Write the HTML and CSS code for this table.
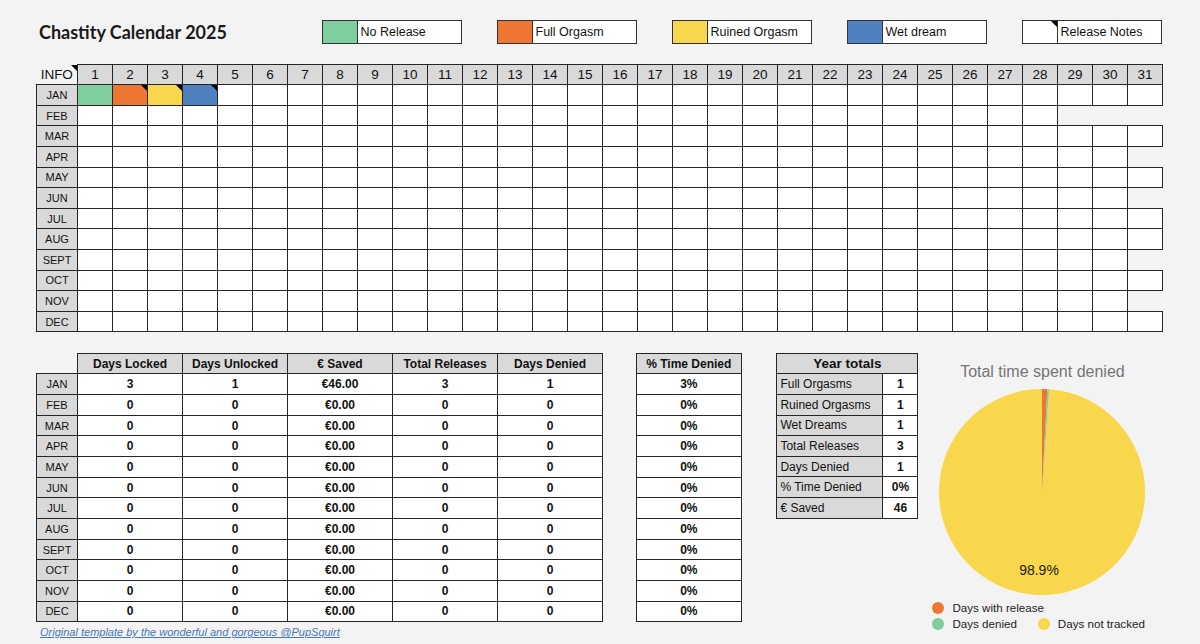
FILE: index.html
```html
<!DOCTYPE html>
<html lang="en">
<head>
<meta charset="utf-8">
<title>Chastity Calendar 2025</title>
<link rel="stylesheet" href="styles.css">
</head>
<body>
<div class="page">
  <header class="topbar">
    <h1 class="title">Chastity Calendar 2025</h1>
    <div class="legend">
      <div class="legend-item"><span class="swatch sw-green"></span><span class="legend-label">No Release</span></div>
      <div class="legend-item"><span class="swatch sw-orange"></span><span class="legend-label">Full Orgasm</span></div>
      <div class="legend-item"><span class="swatch sw-yellow"></span><span class="legend-label">Ruined Orgasm</span></div>
      <div class="legend-item"><span class="swatch sw-blue"></span><span class="legend-label">Wet dream</span></div>
      <div class="legend-item"><span class="swatch n"></span><span class="legend-label">Release Notes</span></div>
    </div>
  </header>

  <table class="cal">
    <colgroup><col class="c-month"><col span="31" class="c-day"></colgroup>
    <thead>
      <tr><th class="info n">INFO</th><th>1</th><th>2</th><th>3</th><th>4</th><th>5</th><th>6</th><th>7</th><th>8</th><th>9</th><th>10</th><th>11</th><th>12</th><th>13</th><th>14</th><th>15</th><th>16</th><th>17</th><th>18</th><th>19</th><th>20</th><th>21</th><th>22</th><th>23</th><th>24</th><th>25</th><th>26</th><th>27</th><th>28</th><th>29</th><th>30</th><th>31</th></tr>
    </thead>
    <tbody>
      <tr><th>JAN</th><td class="g"></td><td class="o n"></td><td class="y n"></td><td class="b n"></td><td></td><td></td><td></td><td></td><td></td><td></td><td></td><td></td><td></td><td></td><td></td><td></td><td></td><td></td><td></td><td></td><td></td><td></td><td></td><td></td><td></td><td></td><td></td><td></td><td></td><td></td><td></td></tr>
      <tr><th>FEB</th><td></td><td></td><td></td><td></td><td></td><td></td><td></td><td></td><td></td><td></td><td></td><td></td><td></td><td></td><td></td><td></td><td></td><td></td><td></td><td></td><td></td><td></td><td></td><td></td><td></td><td></td><td></td><td></td><td class="x"></td><td class="x"></td><td class="x"></td></tr>
      <tr><th>MAR</th><td></td><td></td><td></td><td></td><td></td><td></td><td></td><td></td><td></td><td></td><td></td><td></td><td></td><td></td><td></td><td></td><td></td><td></td><td></td><td></td><td></td><td></td><td></td><td></td><td></td><td></td><td></td><td></td><td></td><td></td><td></td></tr>
      <tr><th>APR</th><td></td><td></td><td></td><td></td><td></td><td></td><td></td><td></td><td></td><td></td><td></td><td></td><td></td><td></td><td></td><td></td><td></td><td></td><td></td><td></td><td></td><td></td><td></td><td></td><td></td><td></td><td></td><td></td><td></td><td></td><td class="x"></td></tr>
      <tr><th>MAY</th><td></td><td></td><td></td><td></td><td></td><td></td><td></td><td></td><td></td><td></td><td></td><td></td><td></td><td></td><td></td><td></td><td></td><td></td><td></td><td></td><td></td><td></td><td></td><td></td><td></td><td></td><td></td><td></td><td></td><td></td><td></td></tr>
      <tr><th>JUN</th><td></td><td></td><td></td><td></td><td></td><td></td><td></td><td></td><td></td><td></td><td></td><td></td><td></td><td></td><td></td><td></td><td></td><td></td><td></td><td></td><td></td><td></td><td></td><td></td><td></td><td></td><td></td><td></td><td></td><td></td><td class="x"></td></tr>
      <tr><th>JUL</th><td></td><td></td><td></td><td></td><td></td><td></td><td></td><td></td><td></td><td></td><td></td><td></td><td></td><td></td><td></td><td></td><td></td><td></td><td></td><td></td><td></td><td></td><td></td><td></td><td></td><td></td><td></td><td></td><td></td><td></td><td></td></tr>
      <tr><th>AUG</th><td></td><td></td><td></td><td></td><td></td><td></td><td></td><td></td><td></td><td></td><td></td><td></td><td></td><td></td><td></td><td></td><td></td><td></td><td></td><td></td><td></td><td></td><td></td><td></td><td></td><td></td><td></td><td></td><td></td><td></td><td></td></tr>
      <tr><th>SEPT</th><td></td><td></td><td></td><td></td><td></td><td></td><td></td><td></td><td></td><td></td><td></td><td></td><td></td><td></td><td></td><td></td><td></td><td></td><td></td><td></td><td></td><td></td><td></td><td></td><td></td><td></td><td></td><td></td><td></td><td></td><td class="x"></td></tr>
      <tr><th>OCT</th><td></td><td></td><td></td><td></td><td></td><td></td><td></td><td></td><td></td><td></td><td></td><td></td><td></td><td></td><td></td><td></td><td></td><td></td><td></td><td></td><td></td><td></td><td></td><td></td><td></td><td></td><td></td><td></td><td></td><td></td><td></td></tr>
      <tr><th>NOV</th><td></td><td></td><td></td><td></td><td></td><td></td><td></td><td></td><td></td><td></td><td></td><td></td><td></td><td></td><td></td><td></td><td></td><td></td><td></td><td></td><td></td><td></td><td></td><td></td><td></td><td></td><td></td><td></td><td></td><td></td><td class="x"></td></tr>
      <tr><th>DEC</th><td></td><td></td><td></td><td></td><td></td><td></td><td></td><td></td><td></td><td></td><td></td><td></td><td></td><td></td><td></td><td></td><td></td><td></td><td></td><td></td><td></td><td></td><td></td><td></td><td></td><td></td><td></td><td></td><td></td><td></td><td></td></tr>
    </tbody>
  </table>

  <section class="bottom">
    <div class="stats-col">
      <table class="stats">
        <colgroup><col class="c-month"><col span="5" class="c-stat"></colgroup>
        <thead>
          <tr><th class="blank"></th><th>Days Locked</th><th>Days Unlocked</th><th>€ Saved</th><th>Total Releases</th><th>Days Denied</th></tr>
        </thead>
        <tbody>
          <tr><th>JAN</th><td>3</td><td>1</td><td>€46.00</td><td>3</td><td>1</td></tr>
          <tr><th>FEB</th><td>0</td><td>0</td><td>€0.00</td><td>0</td><td>0</td></tr>
          <tr><th>MAR</th><td>0</td><td>0</td><td>€0.00</td><td>0</td><td>0</td></tr>
          <tr><th>APR</th><td>0</td><td>0</td><td>€0.00</td><td>0</td><td>0</td></tr>
          <tr><th>MAY</th><td>0</td><td>0</td><td>€0.00</td><td>0</td><td>0</td></tr>
          <tr><th>JUN</th><td>0</td><td>0</td><td>€0.00</td><td>0</td><td>0</td></tr>
          <tr><th>JUL</th><td>0</td><td>0</td><td>€0.00</td><td>0</td><td>0</td></tr>
          <tr><th>AUG</th><td>0</td><td>0</td><td>€0.00</td><td>0</td><td>0</td></tr>
          <tr><th>SEPT</th><td>0</td><td>0</td><td>€0.00</td><td>0</td><td>0</td></tr>
          <tr><th>OCT</th><td>0</td><td>0</td><td>€0.00</td><td>0</td><td>0</td></tr>
          <tr><th>NOV</th><td>0</td><td>0</td><td>€0.00</td><td>0</td><td>0</td></tr>
          <tr><th>DEC</th><td>0</td><td>0</td><td>€0.00</td><td>0</td><td>0</td></tr>
        </tbody>
      </table>
      <a class="credit" href="#">Original template by the wonderful and gorgeous @PupSquirt</a>
    </div>

    <table class="stats pct">
      <thead><tr><th>% Time Denied</th></tr></thead>
      <tbody>
        <tr><td>3%</td></tr><tr><td>0%</td></tr><tr><td>0%</td></tr><tr><td>0%</td></tr>
        <tr><td>0%</td></tr><tr><td>0%</td></tr><tr><td>0%</td></tr><tr><td>0%</td></tr>
        <tr><td>0%</td></tr><tr><td>0%</td></tr><tr><td>0%</td></tr><tr><td>0%</td></tr>
      </tbody>
    </table>

    <table class="totals">
      <colgroup><col class="c-label"><col class="c-val"></colgroup>
      <thead><tr><th colspan="2">Year totals</th></tr></thead>
      <tbody>
        <tr><th>Full Orgasms</th><td>1</td></tr>
        <tr><th>Ruined Orgasms</th><td>1</td></tr>
        <tr><th>Wet Dreams</th><td>1</td></tr>
        <tr><th>Total Releases</th><td>3</td></tr>
        <tr><th>Days Denied</th><td>1</td></tr>
        <tr><th>% Time Denied</th><td>0%</td></tr>
        <tr><th>€ Saved</th><td>46</td></tr>
      </tbody>
    </table>

    <div class="chart">
      <div class="chart-title">Total time spent denied</div>
      <svg class="pie" width="206" height="206" viewBox="0 0 206 206">
        <path d="M103 103 L110.10 0.245 A103 103 0 1 1 103 0 Z" fill="#f8d74c"/>
        <path d="M103 103 L103 0 A103 103 0 0 1 108.32 0.14 Z" fill="#ec7632"/>
        <path d="M103 103 L108.32 0.14 A103 103 0 0 1 110.10 0.245 Z" fill="#7fcf9e"/>
        <text x="100" y="186" text-anchor="middle" class="pie-label">98.9%</text>
      </svg>
      <div class="chart-legend">
        <div class="key"><span class="dot dot-orange"></span>Days with release</div>
        <div class="key-row">
          <div class="key"><span class="dot dot-green"></span>Days denied</div>
          <div class="key"><span class="dot dot-yellow"></span>Days not tracked</div>
        </div>
      </div>
    </div>
  </section>
</div>
</body>
</html>
```

FILE: styles.css
```css
* { box-sizing: border-box; }
html, body { margin: 0; }
body {
  background: #f3f3f3;
  font-family: "Liberation Sans", Arial, sans-serif;
  color: #111;
  width: 1200px;
  height: 644px;
  overflow: hidden;
}
.page { padding: 20px 0 0 36px; }

/* header */
.topbar { display: flex; align-items: center; height: 24px; }
.title {
  font-family: Lato, "Liberation Sans", sans-serif;
  font-weight: 700;
  font-size: 18px;
  color: #1a1a1a;
  margin: 0 0 0 3px;
  width: 282.5px;
}
.legend { display: flex; gap: 35px; }
.legend-item {
  display: flex;
  width: 140px;
  height: 24px;
  border: 1px solid #333;
  background: #fff;
}
.swatch { width: 35px; border-right: 1px solid #333; position: relative; background: #fff; }
.sw-green { background: #7fcf9e; }
.sw-orange { background: #ec7632; }
.sw-yellow { background: #f8d74c; }
.sw-blue { background: #4f81c0; }
.legend-label { font-size: 12.5px; padding-left: 3px; line-height: 22px; color: #111; }

/* note marker */
.n { position: relative; }
.n::after {
  content: "";
  position: absolute;
  top: 0;
  right: 0;
  border-top: 6px solid #000;
  border-left: 6px solid transparent;
}

/* calendar */
.cal {
  margin-top: 20px;
  border-collapse: collapse;
  table-layout: fixed;
  width: 1126px;
}
.cal .c-month { width: 41px; }
.cal .c-day { width: 35px; }
.cal th, .cal td {
  border: 1px solid #262626;
  padding: 0;
  text-align: center;
  background: #fff;
}
.cal thead tr { height: 20.3px; }
.cal thead th { background: #d9d9d9; font-weight: 400; font-size: 13.5px; color: #111; }
.cal thead th.info { background: transparent; border: none; }
.cal tbody tr { height: 20.6px; }
.cal tbody th { background: #d9d9d9; font-weight: 400; font-size: 11px; color: #111; }
.cal td.x { border: none; background: transparent; }
.cal td.g { background: #7fcf9e; }
.cal td.o { background: #ec7632; }
.cal td.y { background: #f8d74c; }
.cal td.b { background: #4f81c0; }

/* bottom */
.bottom { display: flex; align-items: flex-start; margin-top: 21px; }
.stats-col { display: flex; flex-direction: column; }
.stats { border-collapse: collapse; table-layout: fixed; width: 566px; }
.stats .c-month { width: 41px; }
.stats .c-stat { width: 105px; }
.stats th, .stats td {
  border: 1px solid #262626;
  padding: 0;
  text-align: center;
  font-size: 12px;
  font-weight: 700;
  background: #fff;
  color: #111;
}
.stats thead tr { height: 20px; }
.stats thead th { background: #d9d9d9; }
.stats thead th.blank { background: transparent; border: none; }
.stats tbody tr { height: 20.67px; }
.stats tbody th { background: #d9d9d9; font-weight: 400; font-size: 11px; }
.pct { width: 106px; margin-left: 32.8px; }

.credit {
  margin: 3px 0 0 4px;
  font-size: 11px;
  font-style: italic;
  color: #4677ba;
  line-height: 14px;
}

.totals {
  border-collapse: collapse;
  table-layout: fixed;
  width: 141px;
  margin-left: 34.6px;
}
.totals .c-label { width: 106px; }
.totals .c-val { width: 35px; }
.totals th, .totals td { border: 1px solid #262626; padding: 0; color: #111; }
.totals thead tr { height: 20px; }
.totals thead th { background: #d9d9d9; font-size: 13.5px; font-weight: 700; text-align: center; }
.totals tbody tr { height: 20.6px; }
.totals tbody th { background: #d9d9d9; font-weight: 400; font-size: 12px; text-align: left; padding-left: 3px; }
.totals tbody td { background: #fff; font-weight: 700; font-size: 12px; text-align: center; }

/* chart */
.chart { width: 240px; margin-left: 4px; display: flex; flex-direction: column; align-items: center; padding-top: 9px; }
.chart-title { font-size: 16px; line-height: 20px; color: #757575; }
.pie { display: block; margin-top: 7px; }
.pie-label { font-family: "Liberation Sans", Arial, sans-serif; font-size: 14px; fill: #1a1a1a; }
.chart-legend { align-self: flex-start; margin: 5px 0 0 10px; font-size: 11.6px; color: #222; }
.key { display: flex; align-items: center; line-height: 16px; }
.key-row { display: flex; gap: 21px; }
.dot { width: 12px; height: 12px; border-radius: 50%; margin-right: 8px; }
.dot-orange { background: #ec7632; }
.dot-green { background: #7fcf9e; }
.dot-yellow { background: #f8d74c; }
```
